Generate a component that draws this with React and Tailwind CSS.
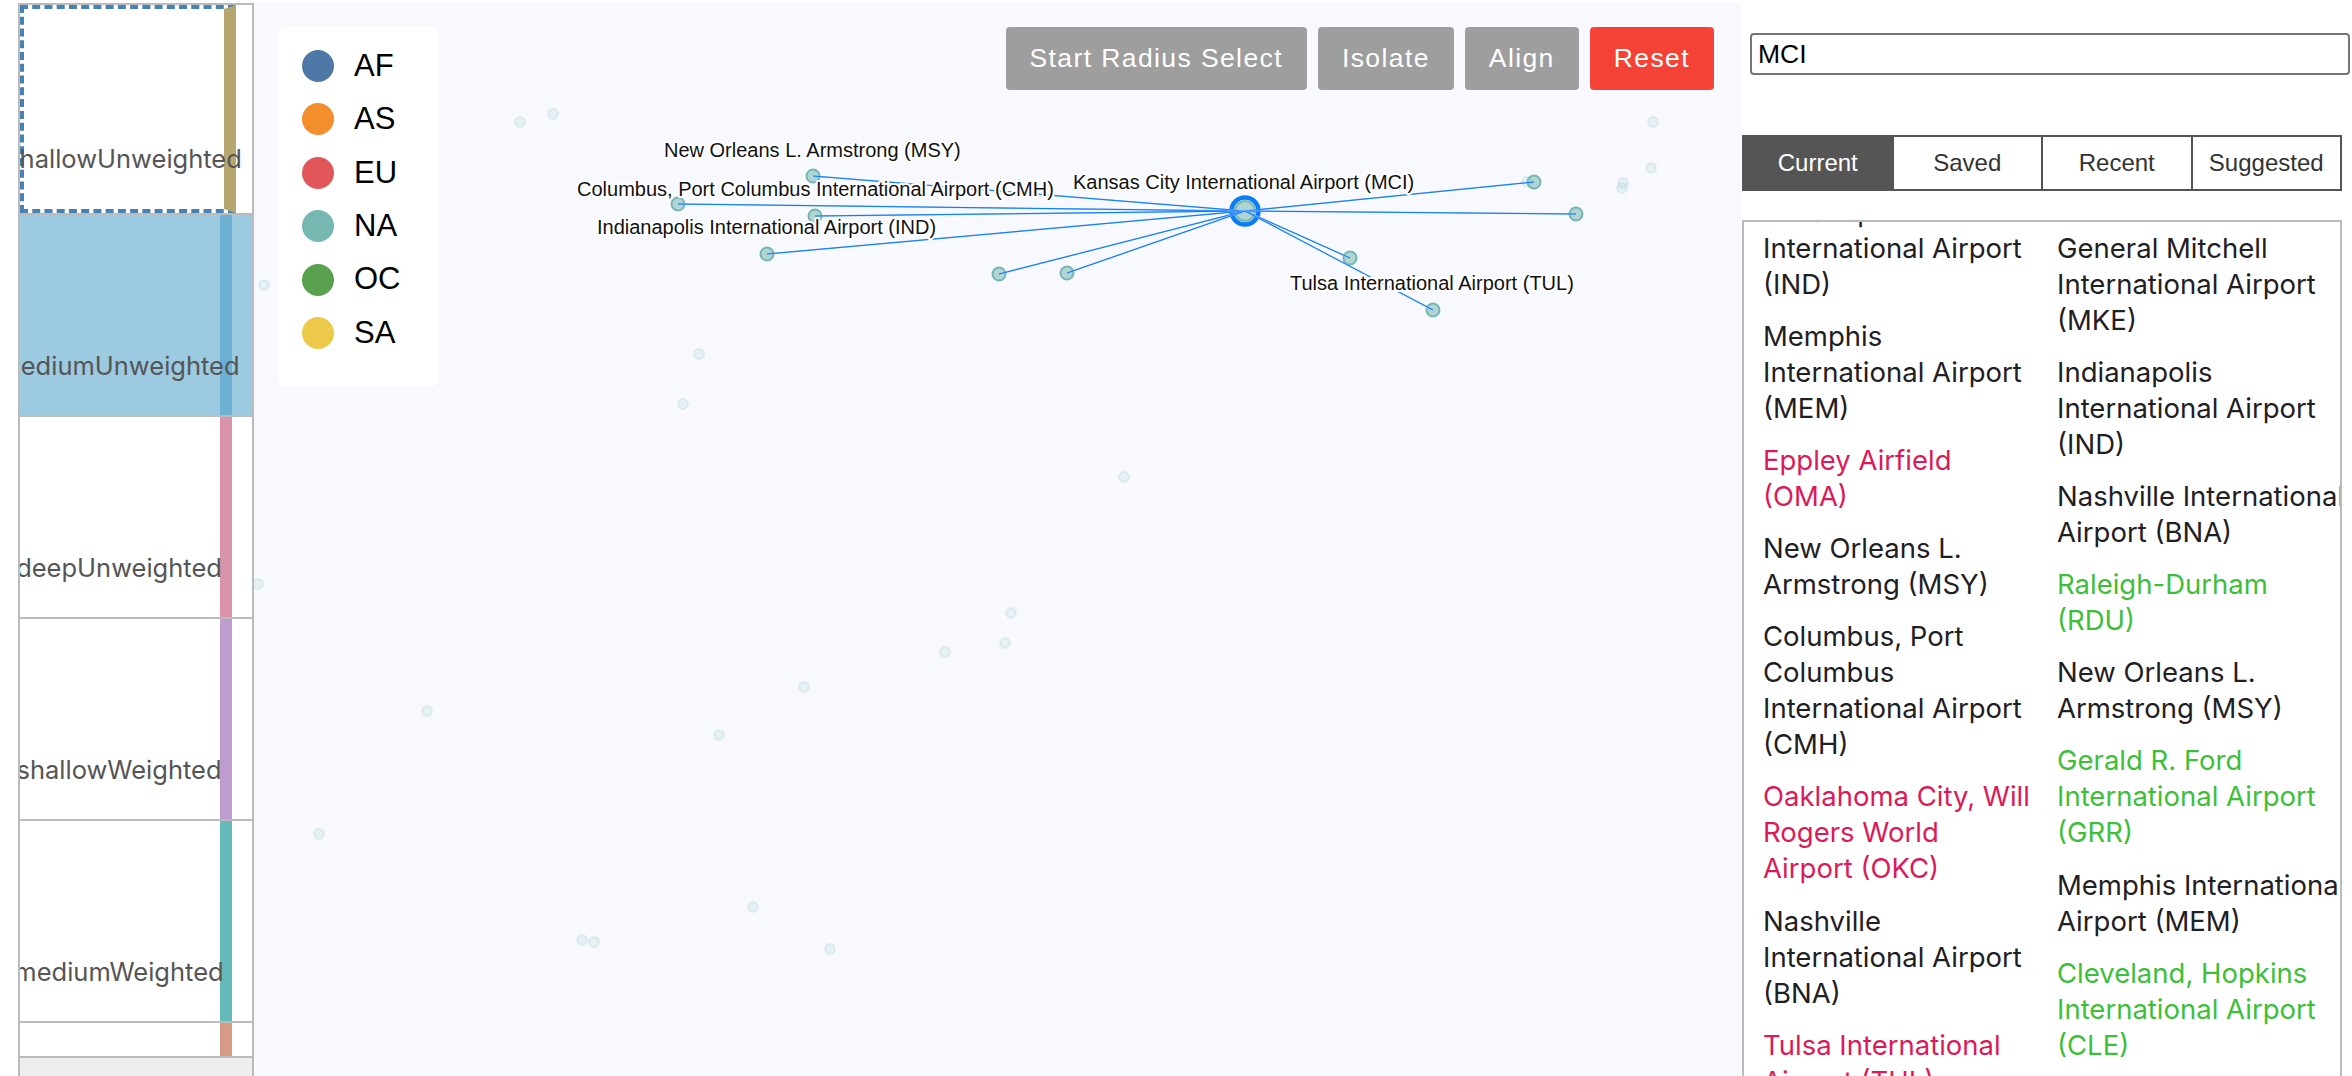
import React from 'react';

const rows = [
  { name: 'shallowUnweighted', bar: 'border-r-[#b6a670]', selected: true },
  { name: 'mediumUnweighted', bar: 'bg-[#6cb0d4]', fill: 'bg-[#9bcae1]' },
  { name: 'deepUnweighted', bar: 'bg-[#db93ac]' },
  { name: 'shallowWeighted', bar: 'bg-[#bf9ccf]' },
  { name: 'mediumWeighted', bar: 'bg-[#63bab8]' },
];

const legend = [
  ['AF', 'bg-[#4e79a7]'],
  ['AS', 'bg-[#f28e2c]'],
  ['EU', 'bg-[#e15759]'],
  ['NA', 'bg-[#76b7b2]'],
  ['OC', 'bg-[#59a14f]'],
  ['SA', 'bg-[#edc949]'],
];

const tabs = ['Current', 'Saved', 'Recent', 'Suggested'];

const black = 'text-[#1f2024]';
const red = 'text-[#dc1a5a]';
const green = 'text-[#3dbf39]';

const columnA = [
  ['Indianapolis International Airport (IND)', black],
  ['Memphis International Airport (MEM)', black],
  ['Eppley Airfield (OMA)', red],
  ['New Orleans L. Armstrong (MSY)', black],
  ['Columbus, Port Columbus International Airport (CMH)', black],
  ['Oaklahoma City, Will Rogers World Airport (OKC)', red],
  ['Nashville International Airport (BNA)', black],
  ['Tulsa International Airport (TUL)', red],
];

const columnB = [
  ['General Mitchell International Airport (MKE)', black],
  ['Indianapolis International Airport (IND)', black],
  ['Nashville International Airport (BNA)', black],
  ['Raleigh-Durham (RDU)', green],
  ['New Orleans L. Armstrong (MSY)', black],
  ['Gerald R. Ford International Airport (GRR)', green],
  ['Memphis International Airport (MEM)', black],
  ['Cleveland, Hopkins International Airport (CLE)', green],
];

// page coordinates of the dimmed airports
const faint = [
  [288, 102], [305, 102], [353, 91], [419, 86], [520, 122], [553, 114], [264, 285], [332, 210], [300, 327], [258, 584],
  [699, 354], [683, 404], [1124, 477], [1011, 613], [1005, 643], [945, 652], [804, 687], [719, 735], [427, 711], [319, 834],
  [753, 907], [582, 940], [594, 942], [830, 949], [1653, 122], [1651, 168], [1623, 183], [1622, 188], [1527, 182], [1245, 203],
];

const center = [1245, 211];
const linked = [
  [813, 176], [678, 204], [815, 216], [767, 254], [999, 274], [1067, 273], [1534, 182], [1576, 214], [1350, 258], [1433, 310],
];

const labels = [
  ['New Orleans L. Armstrong (MSY)', 664, 157],
  ['Columbus, Port Columbus International Airport (CMH)', 577, 196],
  ['Indianapolis International Airport (IND)', 597, 234],
  ['Kansas City International Airport (MCI)', 1073, 189],
  ['Tulsa International Airport (TUL)', 1290, 290],
];

function Graph() {
  return (
    <svg className="block h-full w-full" viewBox="254 3 1487 1073">
      {faint.map(([x, y]) => (
        <circle key={x + '-' + y} cx={x} cy={y} r="5" fill="#76b7b2" fillOpacity="0.13" stroke="#76b7b2" strokeOpacity="0.17" strokeWidth="2" />
      ))}
      {linked.map(([x, y]) => (
        <circle key={x + '-' + y} cx={x} cy={y} r="6.5" fill="#76b7b2" fillOpacity="0.55" stroke="#76b7b2" strokeWidth="2" />
      ))}
      <circle cx={center[0]} cy={center[1]} r="13.5" fill="white" stroke="#0a7cf5" strokeWidth="4.5" />
      <circle cx={center[0]} cy={center[1]} r="10" fill="#76b7b2" fillOpacity="0.6" stroke="#76b7b2" strokeWidth="2" />
      {linked.map(([x, y]) => (
        <g key={x + '-' + y}>
          <line x1={center[0]} y1={center[1]} x2={x} y2={y} stroke="#8dbdff" strokeWidth="1.5" />
          <line x1={center[0]} y1={center[1]} x2={x} y2={y} stroke="#0a7cf5" strokeWidth="1" />
        </g>
      ))}
      {labels.map(([text, x, y]) => (
        <text key={text} x={x} y={y} fontFamily="'Liberation Sans', sans-serif" fontSize="20" fill="#111" stroke="white" strokeWidth="4" paintOrder="stroke" strokeLinejoin="round">
          {text}
        </text>
      ))}
    </svg>
  );
}

function RowList() {
  return (
    <div className="ml-[18px] mt-[3px] flex h-[1073px] w-[236px] shrink-0 flex-col overflow-hidden border-x-2 border-t-2 border-[#bbbbbb] font-['Inter',sans-serif]">
      {rows.map((row) => (
        <div key={row.name} className={'shrink-0 border-b-2 border-[#bbbbbb] ' + (row.selected ? 'h-[210px] ' : 'h-[202px] ') + (row.fill || '')}>
          {row.selected ? (
            <div className={'box-content flex h-[169px] w-[200px] items-end justify-center whitespace-nowrap border-[4px] border-r-[12px] border-dashed border-[#4682b4] pb-[31px] text-[25.5px] text-[#555555] [border-right-style:solid] ' + row.bar}>
              {row.name}
            </div>
          ) : (
            <div className="flex h-full">
              <div className="relative z-10 flex w-[198px] items-end justify-center whitespace-nowrap pb-[30px] text-[25.5px] text-[#555555]">
                {row.name}
              </div>
              <div className={'ml-[2px] w-[12px] ' + row.bar} />
            </div>
          )}
        </div>
      ))}
      <div className="h-[35px] shrink-0 border-b-2 border-[#bbbbbb]">
        <div className="ml-[200px] h-full w-[12px] bg-[#d89a85]" />
      </div>
      <div className="flex-1 bg-[#eeeeee]" />
    </div>
  );
}

function Legend() {
  return (
    <div className="absolute left-[24px] top-[24px] flex h-[360px] w-[160px] flex-col gap-[21.4px] rounded-lg bg-white pl-[24px] pt-[23px]">
      {legend.map(([name, color]) => (
        <div key={name} className="flex h-[32px] items-center gap-[20px] text-[31px] text-black">
          <span className={'h-[32px] w-[32px] rounded-full ' + color} />
          {name}
        </div>
      ))}
    </div>
  );
}

function Toolbar() {
  const cls = 'flex h-[63px] items-center rounded-[4px] px-[24px] text-[26.5px] tracking-[1.4px] text-white';
  return (
    <div className="absolute right-[27px] top-[24px] flex gap-[11px]">
      <button className={cls + ' bg-[#9e9e9e]'}>Start Radius Select</button>
      <button className={cls + ' bg-[#9e9e9e]'}>Isolate</button>
      <button className={cls + ' bg-[#9e9e9e]'}>Align</button>
      <button className={cls + ' bg-[#f44336]'}>Reset</button>
    </div>
  );
}

function Column({ items, width }) {
  return (
    <div className={'flex shrink-0 flex-col gap-[16.1px] ' + width}>
      {items.map(([text, color]) => (
        <div key={text} className={color}>{text}</div>
      ))}
    </div>
  );
}

function Sidebar() {
  return (
    <div className="flex w-[611px] shrink-0 flex-col pt-[33px] font-['Liberation_Sans',sans-serif]">
      <input
        readOnly
        value="MCI"
        className="ml-[9px] h-[42px] w-[600px] rounded-[4px] border-2 border-[#767676] px-[6px] text-[26.5px] text-black outline-none"
      />
      <div className="ml-[1px] mt-[60px] flex h-[56px] w-[600px] border-2 border-[#555555] text-[24px]">
        {tabs.map((tab, i) => (
          <div
            key={tab}
            className={
              'flex flex-1 items-center justify-center ' +
              (i === 0 ? 'bg-[#555555] text-white' : 'border-l-2 border-[#555555] text-[#333333]')
            }
          >
            {tab}
          </div>
        ))}
      </div>
      <div className="ml-[1px] mt-[29px] flex min-h-0 w-[600px] flex-1 overflow-hidden border-x-2 border-t-2 border-[#bbbbbb] pl-[19px] font-['Inter',sans-serif] text-[27.5px] leading-[36px]">
        <div className="-mt-[28px] flex">
          <Column items={columnA} width="w-[294px] pr-[26px]" />
          <div className="pt-[36px]">
            <Column items={columnB} width="w-[292px]" />
          </div>
        </div>
      </div>
    </div>
  );
}

export default function App() {
  return (
    <div className="flex h-[1076px] w-[2352px] overflow-hidden bg-white font-['Liberation_Sans',sans-serif]">
      <RowList />
      <div className="relative mt-[3px] h-[1073px] w-[1487px] shrink-0 overflow-hidden bg-[#f8f9fe]">
        <Graph />
        <Legend />
        <Toolbar />
      </div>
      <Sidebar />
    </div>
  );
}
